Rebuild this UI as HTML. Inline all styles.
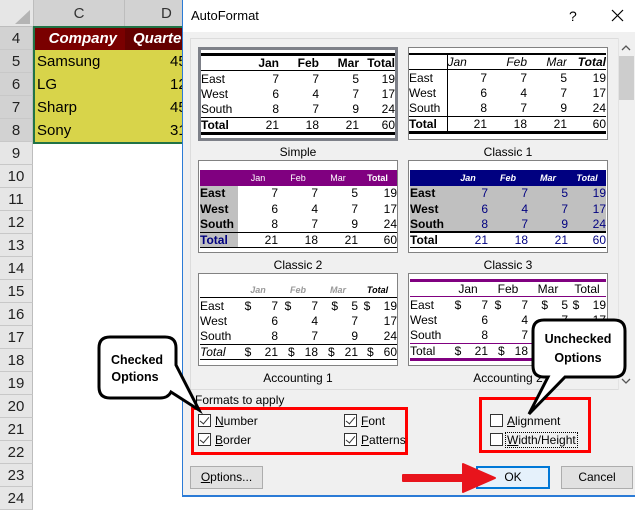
<!DOCTYPE html>
<html><head><meta charset="utf-8"><style>
*{margin:0;padding:0;box-sizing:border-box}
body{width:635px;height:497px;position:relative;overflow:hidden;background:#fff;font-family:"Liberation Sans",sans-serif}
.abs{position:absolute}
.rh{position:absolute;left:0;width:33px;background:#e6e6e6;border-bottom:1px solid #c8c8c8;border-right:1px solid #bdbdbd;color:#222;font-size:15px;text-align:center}
.cell{position:absolute;font-size:15px;color:#000}
.thumb{position:absolute;width:200px;height:93px;background:#fff;border:1px solid #828282}
.thumb table{position:absolute;left:1px;top:5px;border-collapse:collapse;font-size:12px;width:197px;table-layout:fixed}
.thumb td{height:15.6px;padding:0;text-align:right;line-height:14px;white-space:nowrap;overflow:hidden}
.thumb td:first-child{text-align:left}
.lbl{position:absolute;width:200px;text-align:center;font-size:12px;color:#000}
.cb{position:absolute;width:13px;height:13px;border:1px solid #333;background:#fff}
.cb.c::after{content:"";position:absolute;left:3px;top:0px;width:4px;height:8px;border:solid #333;border-width:0 1.5px 1.5px 0;transform:rotate(40deg)}
.ct{position:absolute;font-size:12px;color:#000}
.btn{position:absolute;height:23px;background:#e1e1e1;border:1px solid #adadad;font-size:12px;text-align:center;line-height:21px}
</style></head><body>
<!-- excel -->
<div class="abs" style="left:0;top:0;width:183px;height:27px;background:#e6e6e6;border-bottom:1px solid #bdbdbd"></div>
<div class="abs" style="left:15px;top:10px;width:0;height:0;border-left:15px solid transparent;border-bottom:14px solid #b4b4b4"></div>
<div class="abs" style="left:33px;top:0;width:92px;height:27px;border-left:1px solid #bdbdbd;border-right:1px solid #bdbdbd;font-size:15px;text-align:center;line-height:27px;color:#333;background:#d2d2d2">C</div>
<div class="abs" style="left:125px;top:0;width:60px;height:27px;font-size:15px;line-height:27px;padding-left:36px;color:#333;background:#d2d2d2">D</div>
<div class="rh" style="top:27px;height:23px;line-height:23px;background:#d2d2d2">4</div>
<div class="rh" style="top:50px;height:23px;line-height:23px;background:#d2d2d2">5</div>
<div class="rh" style="top:73px;height:23px;line-height:23px;background:#d2d2d2">6</div>
<div class="rh" style="top:96px;height:23px;line-height:23px;background:#d2d2d2">7</div>
<div class="rh" style="top:119px;height:23px;line-height:23px;background:#d2d2d2">8</div>
<div class="rh" style="top:142px;height:23px;line-height:23px">9</div>
<div class="rh" style="top:165px;height:23px;line-height:23px">10</div>
<div class="rh" style="top:188px;height:23px;line-height:23px">11</div>
<div class="rh" style="top:211px;height:23px;line-height:23px">12</div>
<div class="rh" style="top:234px;height:23px;line-height:23px">13</div>
<div class="rh" style="top:257px;height:23px;line-height:23px">14</div>
<div class="rh" style="top:280px;height:23px;line-height:23px">15</div>
<div class="rh" style="top:303px;height:23px;line-height:23px">16</div>
<div class="rh" style="top:326px;height:23px;line-height:23px">17</div>
<div class="rh" style="top:349px;height:23px;line-height:23px">18</div>
<div class="rh" style="top:372px;height:23px;line-height:23px">19</div>
<div class="rh" style="top:395px;height:23px;line-height:23px">20</div>
<div class="rh" style="top:418px;height:23px;line-height:23px">21</div>
<div class="rh" style="top:441px;height:23px;line-height:23px">22</div>
<div class="rh" style="top:464px;height:23px;line-height:23px">23</div>
<div class="rh" style="top:487px;height:23px;line-height:23px">24</div>
<div class="abs" style="left:33px;top:26px;width:150px;height:118px;border:2px solid #217346;border-right:none"></div>
<div class="abs" style="left:35px;top:28px;width:90px;height:22px;background:#7a0000;color:#fff;font-weight:bold;font-style:italic;font-size:15px;text-align:right;padding-right:8px;line-height:22px">Company</div>
<div class="abs" style="left:125px;top:28px;width:58px;height:22px;background:#640000;color:#fff;font-weight:bold;font-style:italic;font-size:15px;padding-left:8px;line-height:22px">Quarte</div>
<div class="abs" style="left:35px;top:50px;width:148px;height:92px;background:#d8d44a"></div>
<div class="cell" style="left:37px;top:53px">Samsung</div><div class="cell" style="left:170px;top:53px">45</div>
<div class="cell" style="left:37px;top:76px">LG</div><div class="cell" style="left:170px;top:76px">12</div>
<div class="cell" style="left:37px;top:99px">Sharp</div><div class="cell" style="left:170px;top:99px">45</div>
<div class="cell" style="left:37px;top:122px">Sony</div><div class="cell" style="left:170px;top:122px">31</div>

<!-- dialog -->
<div class="abs" style="left:182px;top:0;width:453px;height:497px;background:#f0f0f0;border-left:1px solid #2b7bd6;border-bottom:2px solid #2b7bd6"></div>
<div class="abs" style="left:183px;top:0;width:452px;height:32px;background:#fff"></div>
<div class="abs" style="left:191px;top:8px;font-size:13px;color:#000">AutoFormat</div>
<div class="abs" style="left:569px;top:8px;font-size:14px;color:#000">?</div>
<svg class="abs" style="left:611px;top:9px" width="14" height="14"><path d="M1 1 L12 12 M12 1 L1 12" stroke="#000" stroke-width="1.2"/></svg>
<div class="abs" style="left:190px;top:38px;width:431px;height:352px;border:1px solid #dcdcdc;background:#f0f0f0"></div>
<div class="abs" style="left:618px;top:38px;width:17px;height:352px;background:#f0f0f0;border-left:1px solid #e3e3e3"></div>
<div class="abs" style="left:619px;top:56px;width:15px;height:44px;background:#cdcdcd"></div>
<svg class="abs" style="left:621px;top:44px" width="10" height="8"><path d="M1 6 L5 2 L9 6" stroke="#555" stroke-width="1.3" fill="none"/></svg>
<svg class="abs" style="left:621px;top:377px" width="10" height="8"><path d="M1 2 L5 6 L9 2" stroke="#555" stroke-width="1.3" fill="none"/></svg>

<!-- Simple -->
<div class="thumb" style="left:198px;top:47px;border:3px solid #7d8088;height:94px">
<table style="left:0;top:3px;width:194px"><colgroup><col style="width:38px"><col style="width:40px"><col style="width:40px"><col style="width:40px"><col style="width:36px"></colgroup>
<tr style="border-top:3px solid #000;border-bottom:1px solid #000;font-weight:bold"><td></td><td>Jan</td><td>Feb</td><td>Mar</td><td>Total</td></tr>
<tr><td>East</td><td>7</td><td>7</td><td>5</td><td>19</td></tr>
<tr><td>West</td><td>6</td><td>4</td><td>7</td><td>17</td></tr>
<tr><td>South</td><td>8</td><td>7</td><td>9</td><td>24</td></tr>
<tr style="border-top:1px solid #000;border-bottom:3px solid #000;font-weight:bold"><td>Total</td><td style="font-weight:normal">21</td><td style="font-weight:normal">18</td><td style="font-weight:normal">21</td><td style="font-weight:normal">60</td></tr></table></div>
<div class="lbl" style="left:198px;top:145px">Simple</div>

<!-- Classic 1 -->
<div class="thumb" style="left:408px;top:47px">
<table style="left:0;top:5px;"><colgroup><col style="width:38px"><col style="width:40px"><col style="width:40px"><col style="width:40px"><col style="width:39px"></colgroup>
<tr style="border-top:2px solid #000;border-bottom:1px solid #000;font-style:italic"><td style="border-right:1px solid #000"></td><td style="text-align:left">Jan</td><td>Feb</td><td>Mar</td><td style="font-weight:bold">Total</td></tr>
<tr><td style="border-right:1px solid #000">East</td><td>7</td><td>7</td><td>5</td><td>19</td></tr>
<tr><td style="border-right:1px solid #000">West</td><td>6</td><td>4</td><td>7</td><td>17</td></tr>
<tr><td style="border-right:1px solid #000">South</td><td>8</td><td>7</td><td>9</td><td>24</td></tr>
<tr style="border-top:1px solid #000;border-bottom:3px solid #000"><td style="border-right:1px solid #000;font-weight:bold">Total</td><td>21</td><td>18</td><td>21</td><td>60</td></tr></table></div>
<div class="lbl" style="left:408px;top:145px">Classic 1</div>

<!-- Classic 2 -->
<div class="thumb" style="left:198px;top:160px">
<table style="top:9px"><colgroup><col style="width:38px"><col style="width:40px"><col style="width:40px"><col style="width:40px"><col style="width:39px"></colgroup>
<tr style="background:#800080;color:#fff;font-size:9px;text-align:center"><td style="height:13px"></td><td style="text-align:center">Jan</td><td style="text-align:center">Feb</td><td style="text-align:center">Mar</td><td style="text-align:center;font-weight:bold">Total</td></tr>
<tr style="font-weight:bold"><td style="background:#c0c0c0">East</td><td style="font-weight:normal">7</td><td style="font-weight:normal">7</td><td style="font-weight:normal">5</td><td style="font-weight:normal">19</td></tr>
<tr style="font-weight:bold"><td style="background:#c0c0c0">West</td><td style="font-weight:normal">6</td><td style="font-weight:normal">4</td><td style="font-weight:normal">7</td><td style="font-weight:normal">17</td></tr>
<tr style="font-weight:bold"><td style="background:#c0c0c0">South</td><td style="font-weight:normal">8</td><td style="font-weight:normal">7</td><td style="font-weight:normal">9</td><td style="font-weight:normal">24</td></tr>
<tr style="border-top:1px solid #000;border-bottom:1px solid #000"><td style="background:#c0c0c0;color:#000080;font-weight:bold">Total</td><td>21</td><td>18</td><td>21</td><td>60</td></tr></table></div>
<div class="lbl" style="left:198px;top:258px">Classic 2</div>

<!-- Classic 3 -->
<div class="thumb" style="left:408px;top:160px">
<table style="top:9px;width:196px"><colgroup><col style="width:38px"><col style="width:40px"><col style="width:40px"><col style="width:40px"><col style="width:38px"></colgroup>
<tr style="background:#000080;color:#fff;font-size:9px;font-style:italic;font-weight:bold"><td style="height:13px"></td><td style="text-align:center">Jan</td><td style="text-align:center">Feb</td><td style="text-align:center">Mar</td><td style="text-align:center">Total</td></tr>
<tr style="background:#c0c0c0;color:#000080"><td style="color:#000;font-weight:bold">East</td><td>7</td><td>7</td><td>5</td><td>19</td></tr>
<tr style="background:#c0c0c0;color:#000080"><td style="color:#000;font-weight:bold">West</td><td>6</td><td>4</td><td>7</td><td>17</td></tr>
<tr style="background:#c0c0c0;color:#000080"><td style="color:#000;font-weight:bold">South</td><td>8</td><td>7</td><td>9</td><td>24</td></tr>
<tr style="border-top:2px solid #000;border-bottom:1px solid #000;color:#000080"><td style="color:#000;font-weight:bold">Total</td><td>21</td><td>18</td><td>21</td><td>60</td></tr></table></div>
<div class="lbl" style="left:408px;top:258px">Classic 3</div>

<!-- Accounting 1 -->
<div class="thumb" style="left:198px;top:273px">
<table style="top:8px"><colgroup><col style="width:38px"><col style="width:40px"><col style="width:40px"><col style="width:40px"><col style="width:39px"></colgroup>
<tr style="font-size:9px;font-style:italic;font-weight:bold;color:#999;border-bottom:1px solid #000"><td style="height:15px"></td><td style="text-align:center">Jan</td><td style="text-align:center">Feb</td><td style="text-align:center">Mar</td><td style="text-align:center;color:#000">Total</td></tr>
<tr><td>East</td><td>$&nbsp;&nbsp;&nbsp;&nbsp;&nbsp;&nbsp;7</td><td>$&nbsp;&nbsp;&nbsp;&nbsp;&nbsp;&nbsp;7</td><td>$&nbsp;&nbsp;&nbsp;&nbsp;5</td><td>$&nbsp;&nbsp;&nbsp;&nbsp;19</td></tr>
<tr><td>West</td><td>6</td><td>4</td><td>7</td><td>17</td></tr>
<tr><td>South</td><td>8</td><td>7</td><td>9</td><td>24</td></tr>
<tr style="border-top:1px solid #000;border-bottom:1px solid #000"><td style="font-style:italic">Total</td><td>$&nbsp;&nbsp;&nbsp;&nbsp;21</td><td>$&nbsp;&nbsp;&nbsp;18</td><td>$&nbsp;&nbsp;&nbsp;21</td><td>$&nbsp;&nbsp;&nbsp;60</td></tr></table></div>
<div class="lbl" style="left:198px;top:371px">Accounting 1</div>

<!-- Accounting 2 -->
<div class="thumb" style="left:408px;top:273px">
<table style="top:5px;width:196px"><colgroup><col style="width:38px"><col style="width:40px"><col style="width:40px"><col style="width:40px"><col style="width:38px"></colgroup>
<tr style="border-top:3px solid #800080;border-bottom:1px solid #800080"><td style="height:16px"></td><td style="text-align:center">Jan</td><td style="text-align:center">Feb</td><td style="text-align:center">Mar</td><td style="text-align:center">Total</td></tr>
<tr><td>East</td><td>$&nbsp;&nbsp;&nbsp;&nbsp;&nbsp;&nbsp;7</td><td>$&nbsp;&nbsp;&nbsp;&nbsp;&nbsp;&nbsp;7</td><td>$&nbsp;&nbsp;&nbsp;&nbsp;5</td><td>$&nbsp;&nbsp;&nbsp;&nbsp;19</td></tr>
<tr><td>West</td><td>6</td><td>4</td><td>7</td><td>17</td></tr>
<tr><td>South</td><td>8</td><td>7</td><td>9</td><td>24</td></tr>
<tr style="border-top:1px solid #800080;border-bottom:3px solid #800080"><td>Total</td><td>$&nbsp;&nbsp;&nbsp;&nbsp;21</td><td>$&nbsp;&nbsp;&nbsp;18</td><td>$&nbsp;&nbsp;&nbsp;21</td><td>$&nbsp;&nbsp;&nbsp;60</td></tr></table></div>
<div class="lbl" style="left:408px;top:371px">Accounting 2</div>

<!-- formats -->
<div class="abs" style="left:195px;top:393px;font-size:12px;color:#000">Formats to apply</div>
<div class="abs" style="left:191px;top:407px;width:217px;height:48px;border:3px solid #f00"></div>
<div class="cb c" style="left:198px;top:414px"></div><div class="ct" style="left:215px;top:414px"><u>N</u>umber</div>
<div class="cb c" style="left:198px;top:433px"></div><div class="ct" style="left:215px;top:433px"><u>B</u>order</div>
<div class="cb c" style="left:344px;top:414px"></div><div class="ct" style="left:361px;top:414px"><u>F</u>ont</div>
<div class="cb c" style="left:344px;top:433px"></div><div class="ct" style="left:361px;top:433px"><u>P</u>atterns</div>
<div class="abs" style="left:479px;top:397px;width:112px;height:56px;border:3px solid #f00"></div>
<div class="cb" style="left:490px;top:414px"></div><div class="ct" style="left:507px;top:414px"><u>A</u>lignment</div>
<div class="cb" style="left:490px;top:433px"></div><div class="ct" style="left:505px;top:432px;border:1px dotted #000;padding:0 1px"><u>W</u>idth/Height</div>

<div class="btn" style="left:190px;top:466px;width:73px"><u>O</u>ptions...</div>
<div class="btn" style="left:476px;top:466px;width:74px;border:2px solid #0078d7;background:#e5f1fb;line-height:19px">OK</div>
<div class="btn" style="left:561px;top:466px;width:72px">Cancel</div>

<!-- arrow -->
<svg class="abs" style="left:395px;top:458px" width="110" height="40">
<path d="M8 17 L68 17 L68 6 L100 20 L68 34 L68 23 L8 23 Z" fill="#e8141c" stroke="#e8141c" stroke-width="2" stroke-linejoin="round"/>
</svg>

<!-- callouts -->
<svg class="abs" style="left:0;top:0" width="635" height="497">
<path d="M110 337 H165 Q176 337 176 348 V365 L199 410 L171 392 Q168 398 160 398 H110 Q99 398 99 387 V348 Q99 337 110 337 Z" fill="#fff" stroke="#000" stroke-width="3"/>
<path d="M544 320 H614 Q625 320 625 331 V366 Q625 377 614 377 H565 L529 414 L548 377 H544 Q533 377 533 366 V331 Q533 320 544 320 Z" fill="#fff" stroke="#000" stroke-width="3"/>
<text x="137" y="364" font-family="Liberation Sans" font-weight="bold" font-size="12.5" text-anchor="middle">Checked</text>
<text x="135" y="381" font-family="Liberation Sans" font-weight="bold" font-size="12.5" text-anchor="middle">Options</text>
<text x="578" y="343" font-family="Liberation Sans" font-weight="bold" font-size="12.5" text-anchor="middle">Unchecked</text>
<text x="578" y="362" font-family="Liberation Sans" font-weight="bold" font-size="12.5" text-anchor="middle">Options</text>
</svg>
</body></html>
